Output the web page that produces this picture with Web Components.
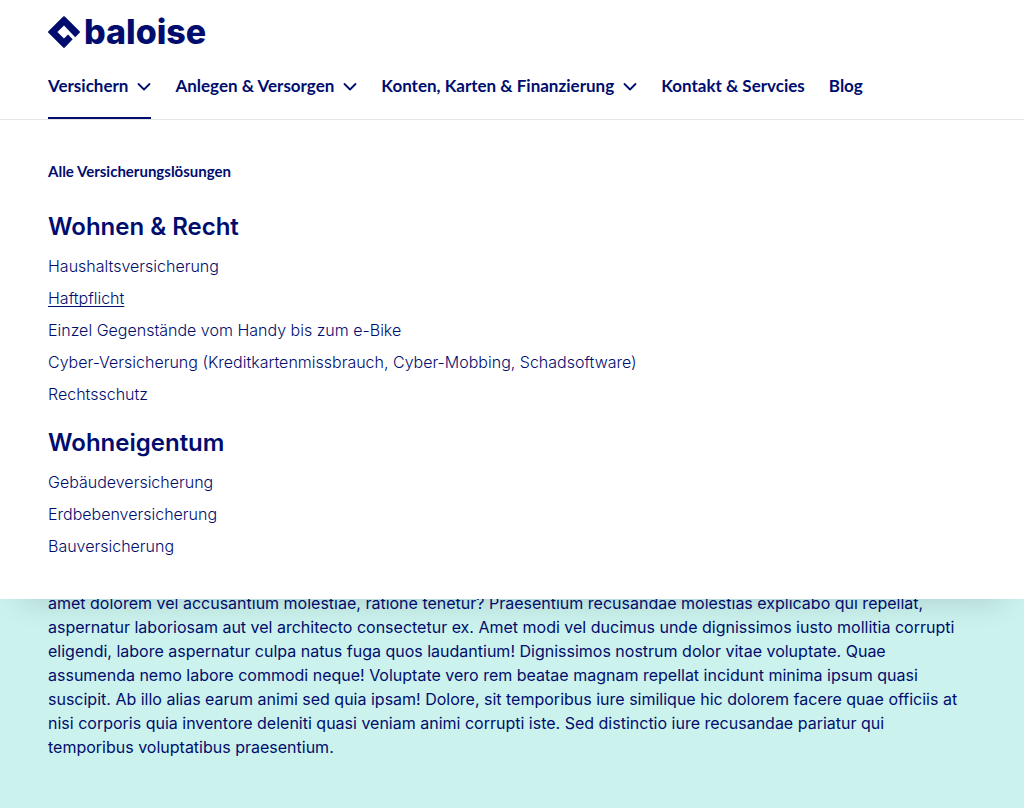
<!DOCTYPE html>
<html lang="de">
<head>
<meta charset="utf-8">
<meta name="viewport" content="width=device-width, initial-scale=1">
<title>Baloise</title>
<style>
  html, body { margin: 0; }
  body {
    --brand: #000d6e;
    --mint: #cbf2ec;
    --line: #e5e5e5;
    --gutter: 48px;
    color: var(--brand);
    background: var(--mint);
    font: 400 16px/24px Inter, "Liberation Sans", sans-serif;
  }
</style>
</head>
<body>
<bal-header>
  <bal-logo slot="brand"></bal-logo>
  <bal-nav-item expanded>Versichern</bal-nav-item>
  <bal-nav-item>Anlegen &amp; Versorgen</bal-nav-item>
  <bal-nav-item>Konten, Karten &amp; Finanzierung</bal-nav-item>
  <bal-nav-item href="#kontakt">Kontakt &amp; Servcies</bal-nav-item>
  <bal-nav-item href="#blog">Blog</bal-nav-item>
  <bal-flyout slot="flyout" label="Alle Versicherungslösungen" href="#versicherungen">
    <bal-link-group heading="Wohnen &amp; Recht">
      <bal-link href="#haushalt">Haushaltsversicherung</bal-link>
      <bal-link href="#haftpflicht" active>Haftpflicht</bal-link>
      <bal-link href="#einzel">Einzel Gegenstände vom Handy bis zum e-Bike</bal-link>
      <bal-link href="#cyber">Cyber-Versicherung (Kreditkartenmissbrauch, Cyber-Mobbing, Schadsoftware)</bal-link>
      <bal-link href="#recht">Rechtsschutz</bal-link>
    </bal-link-group>
    <bal-link-group heading="Wohneigentum">
      <bal-link href="#gebaeude">Gebäudeversicherung</bal-link>
      <bal-link href="#erdbeben">Erdbebenversicherung</bal-link>
      <bal-link href="#bau">Bauversicherung</bal-link>
    </bal-link-group>
  </bal-flyout>
</bal-header>
<bal-content>
  amet dolorem vel accusantium molestiae, ratione tenetur? Praesentium recusandae molestias explicabo qui repellat,<br>
  aspernatur laboriosam aut vel architecto consectetur ex. Amet modi vel ducimus unde dignissimos iusto mollitia corrupti<br>
  eligendi, labore aspernatur culpa natus fuga quos laudantium! Dignissimos nostrum dolor vitae voluptate. Quae<br>
  assumenda nemo labore commodi neque! Voluptate vero rem beatae magnam repellat incidunt minima ipsum quasi<br>
  suscipit. Ab illo alias earum animi sed quia ipsam! Dolore, sit temporibus iure similique hic dolorem facere quae officiis at<br>
  nisi corporis quia inventore deleniti quasi veniam animi corrupti iste. Sed distinctio iure recusandae pariatur qui<br>
  temporibus voluptatibus praesentium.
</bal-content>

<script>
const define = (name, render) => customElements.define(name, class extends HTMLElement {
  connectedCallback() {
    if (this.shadowRoot) return;
    const template = document.createElement('template');
    template.innerHTML = render(this);
    this.attachShadow({ mode: 'open' }).append(template.content);
  }
});
const esc = text => (text || '').replace(/&/g, '&amp;').replace(/"/g, '&quot;');

define('bal-logo', () => `
  <style>
    :host { display: block; }
    a { display: flex; align-items: center; gap: 4px; width: max-content; color: inherit; text-decoration: none; font: 800 34px/32px Inter, sans-serif; }
    svg { display: block; }
  </style>
  <a href="#home">
    <svg width="32" height="32" viewBox="0 0 32 32" aria-hidden="true">
      <path fill="currentColor" d="M15.200.500a1.200 1.200 0 0 1 1.600 0L31.600 15.200a1.200 1.200 0 0 1 0 1.600L27.200 21.200 16 9.400 9.400 16 16 22.600 20 18.600 24.700 23.300 16.800 31.600a1.200 1.200 0 0 1-1.600 0L.400 16.800a1.200 1.200 0 0 1 0-1.600Z"/>
    </svg>
    <span>baloise</span>
  </a>`);

define('bal-header', () => `
  <style>
    :host { display: block; position: relative; z-index: 1; background: #fff; border-bottom: 1px solid var(--line); }
    .bar { padding: 16px var(--gutter) 0; }
    nav { display: flex; gap: 24px; margin-top: 16px; }
    .flyout { position: absolute; top: calc(100% + 1px); left: 0; right: 0; }
  </style>
  <header>
    <div class="bar">
      <slot name="brand"></slot>
      <nav aria-label="Hauptnavigation"><slot></slot></nav>
    </div>
    <div class="flyout"><slot name="flyout"></slot></div>
  </header>`);

define('bal-nav-item', el => {
  const link = el.hasAttribute('href');
  const open = el.hasAttribute('expanded');
  return `
  <style>
    :host { display: block; }
    a, button {
      display: flex; align-items: center; gap: 9px; box-sizing: border-box; height: 55px; padding: 0 0 11px;
      border: 0; background: none; color: inherit; cursor: pointer; text-decoration: none; white-space: nowrap;
      font: 700 17px/24px Lato, sans-serif;
    }
    .open { background: linear-gradient(var(--brand), var(--brand)) bottom / 100% 2px no-repeat; }
    svg { display: block; }
  </style>
  ${link
    ? `<a href="${esc(el.getAttribute('href'))}"><slot></slot></a>`
    : `<button type="button" aria-expanded="${open}" class="${open ? 'open' : ''}"><slot></slot>
        <svg width="14" height="14" viewBox="0 0 14 14" fill="none" stroke="currentColor" stroke-width="1.800" stroke-linecap="round" stroke-linejoin="round" aria-hidden="true"><path d="M1.500 5 7 10.500 12.500 5"/></svg>
      </button>`}`;
});

define('bal-flyout', el => `
  <style>
    :host { display: block; background: #fff; padding: 39px var(--gutter) 37px; box-shadow: 0 20px 30px -20px rgba(0, 7, 57, .16); }
    .all { display: block; width: max-content; color: inherit; text-decoration: none; font: 700 15px/24px Lato, sans-serif; }
    .groups { display: grid; gap: 16px; margin-top: 27px; }
  </style>
  <a class="all" href="${esc(el.getAttribute('href'))}">${esc(el.getAttribute('label'))}</a>
  <div class="groups"><slot></slot></div>`);

define('bal-link-group', el => `
  <style>
    :host { display: block; }
    h2 { margin: 0; padding: 1px 0 7px; font: 600 24px/32px Inter, sans-serif; }
    div { display: grid; }
  </style>
  <h2>${esc(el.getAttribute('heading'))}</h2>
  <div><slot></slot></div>`);

define('bal-link', el => `
  <style>
    :host { display: block; }
    a { display: block; width: max-content; padding: 4px 0; color: inherit; text-decoration: none; font-weight: 350; }
    :host([active]) a { text-decoration: underline; text-decoration-skip-ink: none; text-underline-offset: 2px; }
  </style>
  <a href="${esc(el.getAttribute('href'))}"><slot></slot></a>`);

define('bal-content', () => `
  <style>
    :host { display: block; padding: 471px var(--gutter) 48px; }
    p { margin: 0; }
  </style>
  <main><p><slot></slot></p></main>`);
</script>
</body>
</html>
